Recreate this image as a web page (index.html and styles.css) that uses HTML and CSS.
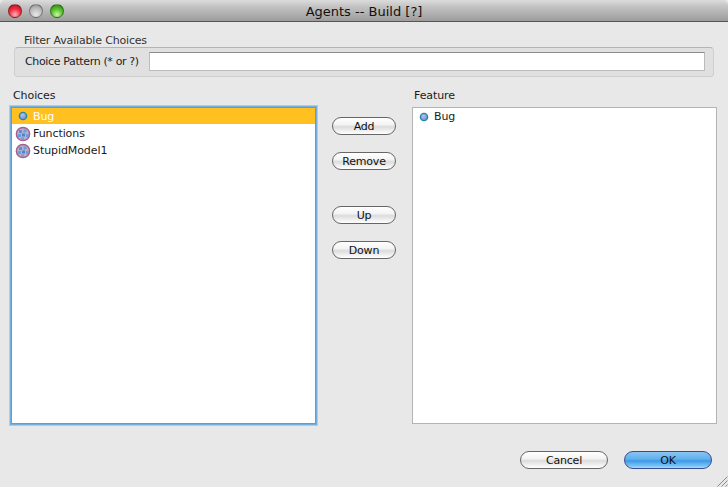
FILE: index.html
```html
<!DOCTYPE html>
<html lang="en">
<head>
<meta charset="utf-8">
<title>Agents -- Build [?]</title>
<link rel="stylesheet" href="styles.css">
</head>
<body>
<div class="window">
  <header class="titlebar">
    <div class="lights">
      <span class="light light-close"></span>
      <span class="light light-min"></span>
      <span class="light light-zoom"></span>
    </div>
    <div class="title">Agents -- Build [?]</div>
  </header>
  <main class="content">
    <section class="filter">
      <div class="filter-title">Filter Available Choices</div>
      <div class="filter-box">
        <label class="filter-label">Choice Pattern (* or ?)</label>
        <div class="filter-input"></div>
      </div>
    </section>
    <section class="lists">
      <div class="col-left">
        <div class="list-label">Choices</div>
        <ul class="list list-focused">
          <li class="row row-selected"><svg class="icon" viewBox="0 0 16 16"><use href="#dot"/></svg><span>Bug</span></li>
          <li class="row"><svg class="icon" viewBox="0 0 16 16"><use href="#globe"/></svg><span>Functions</span></li>
          <li class="row"><svg class="icon" viewBox="0 0 16 16"><use href="#globe"/></svg><span>StupidModel1</span></li>
        </ul>
      </div>
      <div class="col-mid">
        <button class="btn btn-add">Add</button>
        <button class="btn btn-remove">Remove</button>
        <button class="btn btn-up">Up</button>
        <button class="btn btn-down">Down</button>
      </div>
      <div class="col-right">
        <div class="list-label">Feature</div>
        <ul class="list list-plain">
          <li class="row"><svg class="icon" viewBox="0 0 16 16"><use href="#dot"/></svg><span>Bug</span></li>
        </ul>
      </div>
    </section>
    <footer class="actions">
      <button class="btn btn-wide">Cancel</button>
      <button class="btn btn-wide btn-default">OK</button>
    </footer>
  </main>
  <svg class="grip" viewBox="0 0 12 12"><path d="M11.5 1.5 1.5 11.5M11.5 5.5 5.5 11.5M11.5 9.5 9.5 11.5" stroke="#8a8a8a" fill="none"/></svg>
</div>
<svg class="defs" width="0" height="0">
  <defs>
    <radialGradient id="dotfill" cx="0.4" cy="0.35" r="0.7">
      <stop offset="0" stop-color="#b4c0f0"/>
      <stop offset="1" stop-color="#7f88d0"/>
    </radialGradient>
    <symbol id="dot" viewBox="0 0 16 16">
      <circle cx="8" cy="8" r="3.6" fill="url(#dotfill)" stroke="#1f8aa6" stroke-width="1.4"/>
    </symbol>
    <symbol id="globe" viewBox="0 0 16 16">
      <circle cx="8" cy="8" r="6.6" fill="#b6b4c8" stroke="#a6608e" stroke-width="1.5"/>
      <rect x="4" y="4" width="3" height="3" fill="#5c8ed8"/>
      <rect x="8.5" y="3.5" width="3" height="3" fill="#6c9ce0"/>
      <rect x="3" y="8" width="3" height="3" fill="#6c9ce0"/>
      <rect x="7" y="7.5" width="3" height="3" fill="#4f82d0"/>
      <rect x="11" y="8" width="2.5" height="3" fill="#6c9ce0"/>
      <rect x="6" y="11.5" width="3" height="2" fill="#6c9ce0"/>
    </symbol>
  </defs>
</svg>
</body>
</html>
```
FILE: styles.css
```css
* { box-sizing: border-box; }
html, body { margin: 0; padding: 0; height: 100%; overflow: hidden; }
body { background: #e8e8e8; font-family: "DejaVu Sans", "Liberation Sans", sans-serif; font-size: 11px; letter-spacing: -0.08px; color: #1a1a1a; }
.window { width: 728px; height: 487px; display: flex; flex-direction: column; position: relative; }
.titlebar { height: 22px; flex: none; display: flex; align-items: center; position: relative; background: linear-gradient(#dcdcdc, #c4c4c4 30%, #9c9c9c); border-bottom: 1px solid #555; border-radius: 5px 5px 0 0; }
.lights { display: flex; gap: 7px; padding-left: 8px; }
.light { width: 14px; height: 14px; border-radius: 50%; border: 1px solid rgba(0,0,0,.35); }
.light-close { background: radial-gradient(circle at 50% 80%, #ffb0b8 0, #f03040 50%, #b01020 100%); }
.light-min { background: radial-gradient(circle at 50% 80%, #e8e8e8 0, #bcbcbc 55%, #8e8e8e 100%); }
.light-zoom { background: radial-gradient(circle at 50% 80%, #c8f8a0 0, #58c030 50%, #2c8014 100%); }
.title { position: absolute; left: 0; right: 0; padding-top: 2px; text-align: center; font-size: 13px; letter-spacing: 0; color: #111; }
.content { flex: 1; display: flex; flex-direction: column; padding: 0 11px; }
.filter { padding: 12px 3px 0; }
.filter-title { height: 13px; line-height: 13px; padding-left: 10px; letter-spacing: -0.17px; color: #333; }
.filter-box { width: 700px; height: 30px; display: flex; align-items: center; gap: 10px; padding: 0 8px 1px 10px; background: #e0e0e0; border: 1px solid #cfcfcf; border-top-color: #b4b4b4; border-radius: 4px; }
.filter-label { flex: none; letter-spacing: -0.36px; color: #222; }
.filter-input { flex: 1; height: 19px; background: #fff; border: 1px solid #bbb; border-top-color: #8c8c8c; }
.lists { display: flex; margin-top: 11px; }
.col-left { width: 305px; flex: none; }
.col-mid { width: 96px; flex: none; display: flex; flex-direction: column; align-items: center; padding-top: 29px; }
.col-right { width: 305px; flex: none; }
.list-label { height: 19px; line-height: 16px; padding-left: 2px; }
.list { list-style: none; margin: 0; padding: 0; background: #fff; }
.list-focused { height: 317px; border: 1px solid #5a9fd8; box-shadow: 0 0 0 1px #72b0e4, 0 0 0 2px rgba(125,180,228,.55); }
.list-plain { height: 317px; border: 1px solid #b4b4b4; }
.row { height: 17px; display: flex; align-items: center; gap: 2px; padding-left: 3px; }
.row-selected { height: 16px; margin-bottom: 1px; background: #ffc020; color: #fff; }
.icon { width: 16px; height: 16px; flex: none; }
.btn { width: 64px; height: 18px; padding: 0; font: 11px "DejaVu Sans", "Liberation Sans", sans-serif; letter-spacing: -0.2px; color: #111; border: 1px solid #666; border-radius: 9px; background: linear-gradient(#fff, #f4f4f4 40%, #dcdcdc 55%, #f4f4f4 85%, #fff); }
.btn-add { margin-bottom: 17px; }
.btn-remove { margin-bottom: 36px; }
.btn-up { margin-bottom: 17px; }
.actions { display: flex; justify-content: flex-end; gap: 16px; margin-top: 27px; padding-right: 5px; }
.btn-wide { width: 88px; }
.btn-default { background: linear-gradient(#8cc4f2, #5cb0ee 45%, #3e98e4 55%, #80c8f6 90%, #a8e0fc); border-color: #3a4a8c; }
.grip { position: absolute; right: 0; bottom: 0; width: 12px; height: 12px; }
.defs { position: absolute; }
```
